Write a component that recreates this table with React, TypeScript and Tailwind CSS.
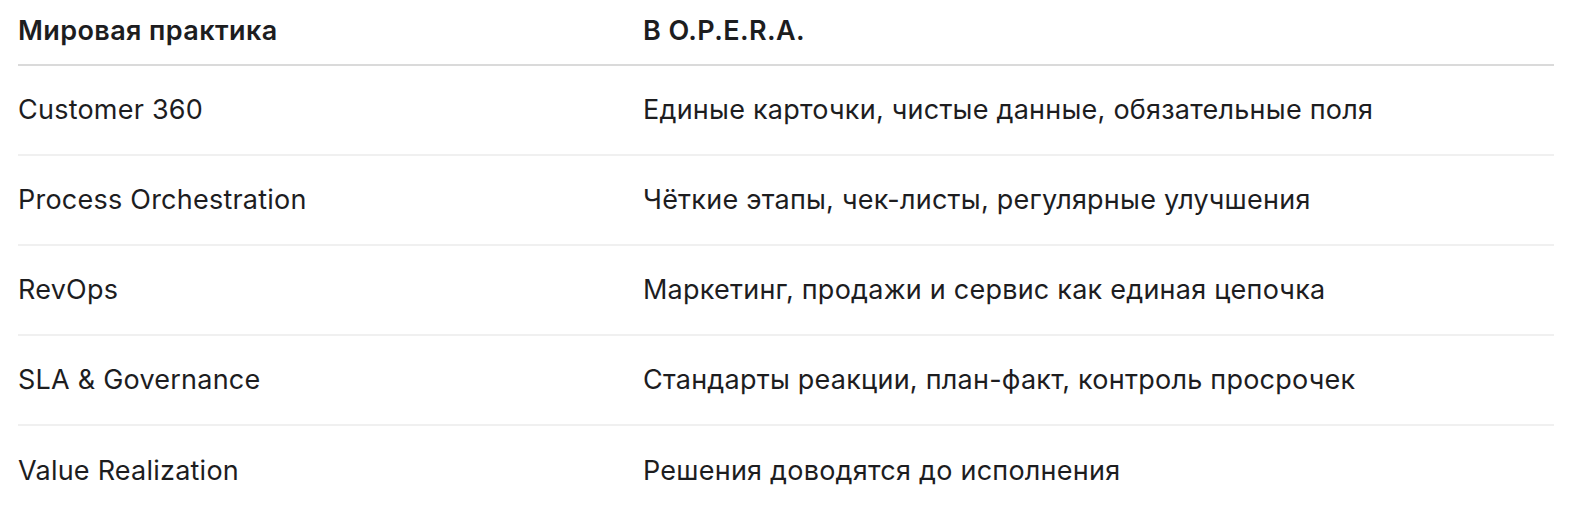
const ROWS = [
  { practice: "Customer 360", opera: "Единые карточки, чистые данные, обязательные поля" },
  { practice: "Process Orchestration", opera: "Чёткие этапы, чек-листы, регулярные улучшения" },
  { practice: "RevOps", opera: "Маркетинг, продажи и сервис как единая цепочка" },
  { practice: "SLA & Governance", opera: "Стандарты реакции, план-факт, контроль просрочек" },
  { practice: "Value Realization", opera: "Решения доводятся до исполнения" },
];

export default function App() {
  return (
    <div className="min-h-[524px] bg-white px-[18px] font-['Inter',sans-serif] text-[27px] tracking-[0.23px] text-[#1d1d1f]">
      <div className="w-[1536px]">
        {/* header */}
        <div className="grid h-[66px] grid-cols-[625px_1fr] items-center border-b-2 border-[#dadada] pb-[2px] font-semibold tracking-[0.4px]">
          <div>Мировая практика</div>
          <div>В O.P.E.R.A.</div>
        </div>
        {ROWS.map((row, i) => (
          <div
            key={row.practice}
            className={
              "grid h-[90px] grid-cols-[625px_1fr] items-center " +
              (i < ROWS.length - 1 ? "border-b-2 border-[#f0f0f0]" : "")
            }
          >
            <div>{row.practice}</div>
            <div>{row.opera}</div>
          </div>
        ))}
      </div>
    </div>
  );
}
